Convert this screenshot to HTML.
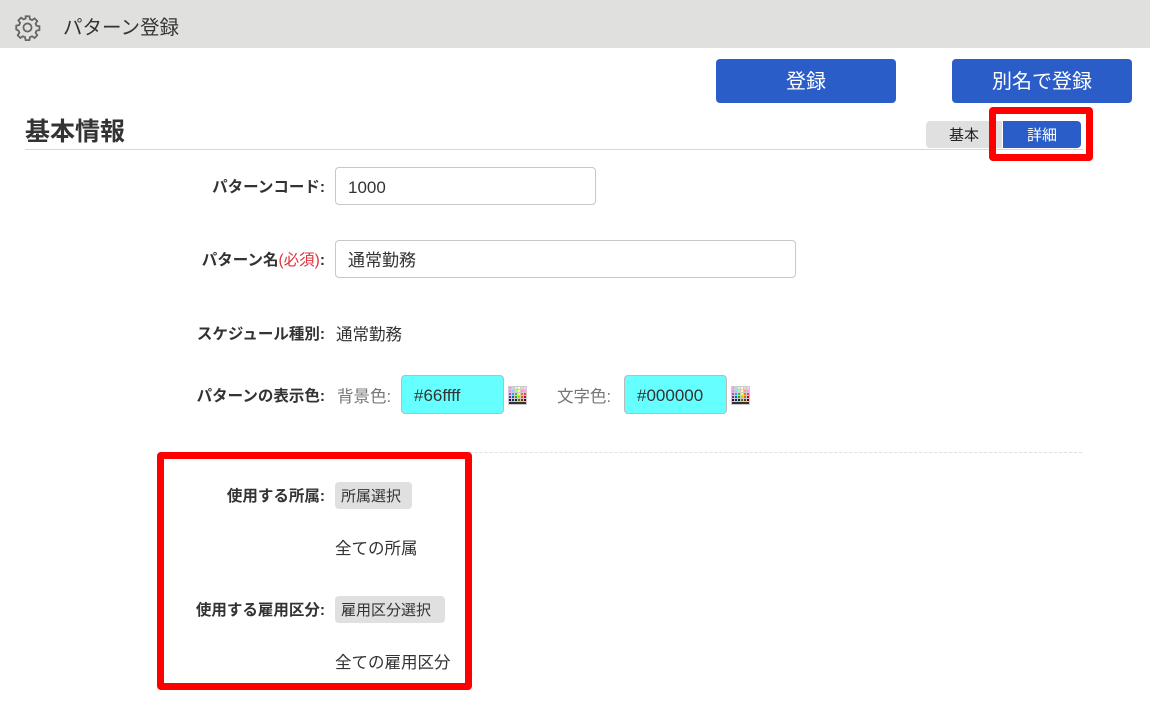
<!DOCTYPE html>
<html><head><meta charset="utf-8"><style>
*{margin:0;padding:0;box-sizing:border-box}
body{width:1150px;height:707px;background:#fff;position:relative;overflow:hidden;font-family:"Liberation Sans","Noto Sans CJK JP",sans-serif;color:#333}
.a{position:absolute}
.hdr{left:0;top:0;width:1150px;height:48px;background:#e0e0df}
.btn{background:#2b5dc9;color:#fff;border-radius:4px;font-size:20px;text-align:center;line-height:46px;height:44px;width:180px;top:59px}
.lbl{font-weight:bold;font-size:15.5px;right:825px;white-space:nowrap;line-height:20px}
.txt{font-size:16.5px;line-height:20px;white-space:nowrap}
.inp{border:1px solid #c8c8c8;border-radius:4px;font-size:17px;padding-left:12px;background:#fff;line-height:39px}
.red{border:7px solid #f00;border-radius:4px}
.gb{background:#e0e0e0;border-radius:4px;font-size:15px;line-height:29px;height:27px;padding:0 6px}
</style></head><body>
<div class="a hdr"></div>
<svg class="a" style="left:14px;top:14px" width="27" height="27" viewBox="0 0 24 24" fill="none" stroke="#666" stroke-width="1.6"><path d="M10.3 2h3.4l.5 2.6 1.9.8 2.2-1.5 2.4 2.4-1.5 2.2.8 1.9 2.6.5v3.4l-2.6.5-.8 1.9 1.5 2.2-2.4 2.4-2.2-1.5-1.9.8-.5 2.6h-3.4l-.5-2.6-1.9-.8-2.2 1.5-2.4-2.4 1.5-2.2-.8-1.9L2 13.7v-3.4l2.6-.5.8-1.9-1.5-2.2 2.4-2.4 2.2 1.5 1.9-.8z"/><circle cx="12" cy="12" r="3.6"/></svg>
<div class="a" style="left:63px;top:14px;font-size:19.5px;color:#333;line-height:28px">パターン登録</div>
<div class="a btn" style="left:716px">登録</div>
<div class="a btn" style="left:952px">別名で登録</div>
<div class="a" style="left:25px;top:117px;font-size:25px;font-weight:bold;line-height:30px;color:#333">基本情報</div>
<div class="a" style="left:25px;top:149px;width:1058px;height:1px;background:#d8d8d8"></div>
<div class="a" style="left:926px;top:121px;width:76px;height:27px;background:#e0e0e0;border-radius:4px 0 0 4px;font-size:15px;line-height:29px;text-align:center;color:#222">基本</div>
<div class="a" style="left:1003px;top:121px;width:78px;height:27px;background:#2b5dc9;border-radius:0 4px 4px 0;font-size:15px;line-height:29px;text-align:center;color:#fff">詳細</div>
<div class="a red" style="left:989px;top:107px;width:104px;height:54px"></div>

<div class="a lbl" style="top:178px">パターンコード:</div>
<div class="a inp" style="left:335px;top:167px;width:261px;height:38px">1000</div>
<div class="a lbl" style="top:251px">パターン名<span style="color:#e0303a;font-weight:normal">(必須)</span>:</div>
<div class="a inp" style="left:335px;top:240px;width:461px;height:38px">通常勤務</div>
<div class="a lbl" style="top:325px">スケジュール種別:</div>
<div class="a txt" style="left:336px;top:325px">通常勤務</div>
<div class="a lbl" style="top:387px">パターンの表示色:</div>
<div class="a txt" style="left:337px;top:387px;color:#777">背景色:</div>
<div class="a inp" style="left:401px;top:375px;width:103px;height:39px;background:#66ffff;border-color:#bbb">#66ffff</div>
<div class="a txt" style="left:557px;top:387px;color:#777">文字色:</div>
<div class="a inp" style="left:624px;top:375px;width:103px;height:39px;background:#66ffff;border-color:#bbb">#000000</div>
<svg class="a" style="left:508px;top:386px" width="19" height="19" viewBox="0 0 19 19"><rect width="19" height="19" fill="#ccc"/>
<rect x="1" y="1" width="2" height="2" fill="#f9c"/><rect x="4" y="1" width="2" height="2" fill="#ccf"/><rect x="7" y="1" width="2" height="2" fill="#cfc"/><rect x="10" y="1" width="2" height="2" fill="#ffc"/><rect x="13" y="1" width="2" height="2" fill="#fcc"/><rect x="16" y="1" width="2" height="2" fill="#fcf"/>
<rect x="1" y="4" width="2" height="2" fill="#c9f"/><rect x="4" y="4" width="2" height="2" fill="#9cf"/><rect x="7" y="4" width="2" height="2" fill="#9f9"/><rect x="10" y="4" width="2" height="2" fill="#ff9"/><rect x="13" y="4" width="2" height="2" fill="#f99"/><rect x="16" y="4" width="2" height="2" fill="#f9f"/>
<rect x="1" y="7" width="2" height="2" fill="#c3f"/><rect x="4" y="7" width="2" height="2" fill="#39f"/><rect x="7" y="7" width="2" height="2" fill="#3c3"/><rect x="10" y="7" width="2" height="2" fill="#ff3"/><rect x="13" y="7" width="2" height="2" fill="#f63"/><rect x="16" y="7" width="2" height="2" fill="#f36"/>
<rect x="1" y="10" width="2" height="2" fill="#639"/><rect x="4" y="10" width="2" height="2" fill="#069"/><rect x="7" y="10" width="2" height="2" fill="#393"/><rect x="10" y="10" width="2" height="2" fill="#cc0"/><rect x="13" y="10" width="2" height="2" fill="#c60"/><rect x="16" y="10" width="2" height="2" fill="#c03"/>
<rect x="1" y="13" width="2" height="2" fill="#303"/><rect x="4" y="13" width="2" height="2" fill="#036"/><rect x="7" y="13" width="2" height="2" fill="#030"/><rect x="10" y="13" width="2" height="2" fill="#660"/><rect x="13" y="13" width="2" height="2" fill="#630"/><rect x="16" y="13" width="2" height="2" fill="#600"/>
<rect x="1" y="16" width="17" height="2" fill="#333"/></svg>
<svg class="a" style="left:731px;top:386px" width="19" height="19" viewBox="0 0 19 19"><rect width="19" height="19" fill="#ccc"/>
<rect x="1" y="1" width="2" height="2" fill="#f9c"/><rect x="4" y="1" width="2" height="2" fill="#ccf"/><rect x="7" y="1" width="2" height="2" fill="#cfc"/><rect x="10" y="1" width="2" height="2" fill="#ffc"/><rect x="13" y="1" width="2" height="2" fill="#fcc"/><rect x="16" y="1" width="2" height="2" fill="#fcf"/>
<rect x="1" y="4" width="2" height="2" fill="#c9f"/><rect x="4" y="4" width="2" height="2" fill="#9cf"/><rect x="7" y="4" width="2" height="2" fill="#9f9"/><rect x="10" y="4" width="2" height="2" fill="#ff9"/><rect x="13" y="4" width="2" height="2" fill="#f99"/><rect x="16" y="4" width="2" height="2" fill="#f9f"/>
<rect x="1" y="7" width="2" height="2" fill="#c3f"/><rect x="4" y="7" width="2" height="2" fill="#39f"/><rect x="7" y="7" width="2" height="2" fill="#3c3"/><rect x="10" y="7" width="2" height="2" fill="#ff3"/><rect x="13" y="7" width="2" height="2" fill="#f63"/><rect x="16" y="7" width="2" height="2" fill="#f36"/>
<rect x="1" y="10" width="2" height="2" fill="#639"/><rect x="4" y="10" width="2" height="2" fill="#069"/><rect x="7" y="10" width="2" height="2" fill="#393"/><rect x="10" y="10" width="2" height="2" fill="#cc0"/><rect x="13" y="10" width="2" height="2" fill="#c60"/><rect x="16" y="10" width="2" height="2" fill="#c03"/>
<rect x="1" y="13" width="2" height="2" fill="#303"/><rect x="4" y="13" width="2" height="2" fill="#036"/><rect x="7" y="13" width="2" height="2" fill="#030"/><rect x="10" y="13" width="2" height="2" fill="#660"/><rect x="13" y="13" width="2" height="2" fill="#630"/><rect x="16" y="13" width="2" height="2" fill="#600"/>
<rect x="1" y="16" width="17" height="2" fill="#333"/></svg>

<div class="a" style="left:160px;top:452px;width:922px;border-top:1px dashed #e0e0e0"></div>
<div class="a red" style="left:157px;top:452px;width:315px;height:238px"></div>
<div class="a lbl" style="top:487px">使用する所属:</div>
<div class="a gb" style="left:335px;top:482px;width:77px">所属選択</div>
<div class="a txt" style="left:335px;top:539px">全ての所属</div>
<div class="a lbl" style="top:601px">使用する雇用区分:</div>
<div class="a gb" style="left:335px;top:596px;width:110px">雇用区分選択</div>
<div class="a txt" style="left:335px;top:653px">全ての雇用区分</div>
</body></html>
